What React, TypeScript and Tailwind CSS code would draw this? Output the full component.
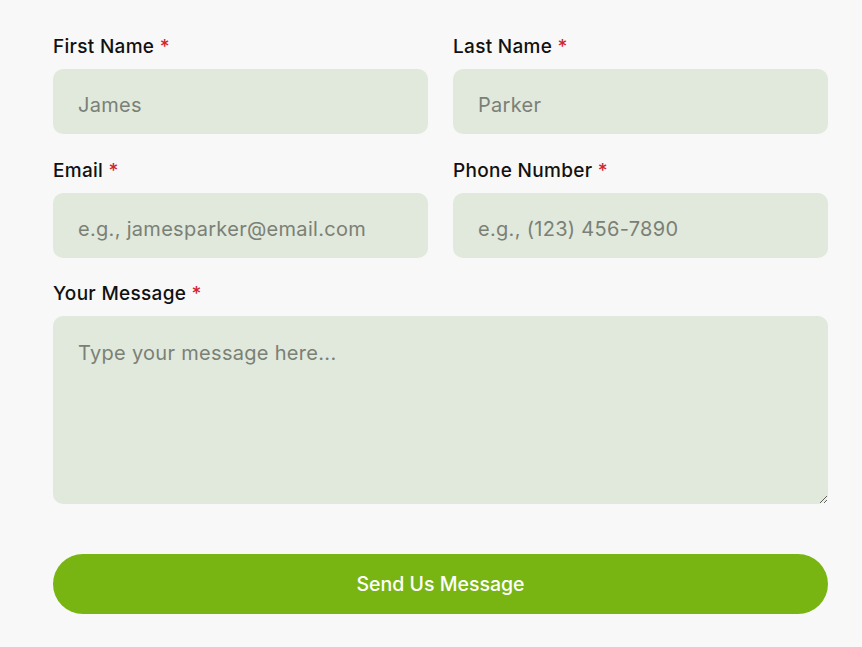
import React from "react";

const font = { fontFamily: "Inter, 'Noto Sans', sans-serif" };

function Label({ text }: { text: string }) {
  return (
    <label className="block text-[19px] leading-[24px] font-medium text-[#111] mb-[10px] tracking-[0.3px]">
      {text} <span className="text-[#d0262f]">*</span>
    </label>
  );
}

function Field({ label, placeholder }: { label: string; placeholder: string }) {
  return (
    <div>
      <Label text={label} />
      <input
        placeholder={placeholder}
        className="block w-full h-[65px] rounded-[10px] bg-[#e0e9dc] px-[25px] pt-[6px] text-[20px] tracking-[0.3px] text-[#333] placeholder:text-[#7b8076] outline-none"
        style={font}
      />
    </div>
  );
}

export default function App() {
  return (
    <div className="min-h-[647px] bg-[#f8f8f8] pt-[35px] px-[53px]" style={font}>
      <div className="w-[775px]">
        <div className="grid grid-cols-2 gap-x-[25px] gap-y-[25px]">
          <Field label="First Name" placeholder="James" />
          <Field label="Last Name" placeholder="Parker" />
          <Field label="Email" placeholder="e.g., jamesparker@email.com" />
          <Field label="Phone Number" placeholder="e.g., (123) 456-7890" />
        </div>
        <div className="mt-[24px]">
          <Label text="Your Message" />
          <textarea
            placeholder="Type your message here..."
            className="block w-full h-[188px] rounded-[10px] bg-[#e0e9dc] px-[25px] pt-[22px] text-[20px] tracking-[0.3px] text-[#333] placeholder:text-[#7b8076] outline-none"
            style={font}
          />
        </div>
        <button
          className="mt-[50px] w-full h-[60px] rounded-full bg-[#78b513] text-white text-[19.5px] font-medium pt-[2px]"
          style={font}
        >
          Send Us Message
        </button>
      </div>
    </div>
  );
}
